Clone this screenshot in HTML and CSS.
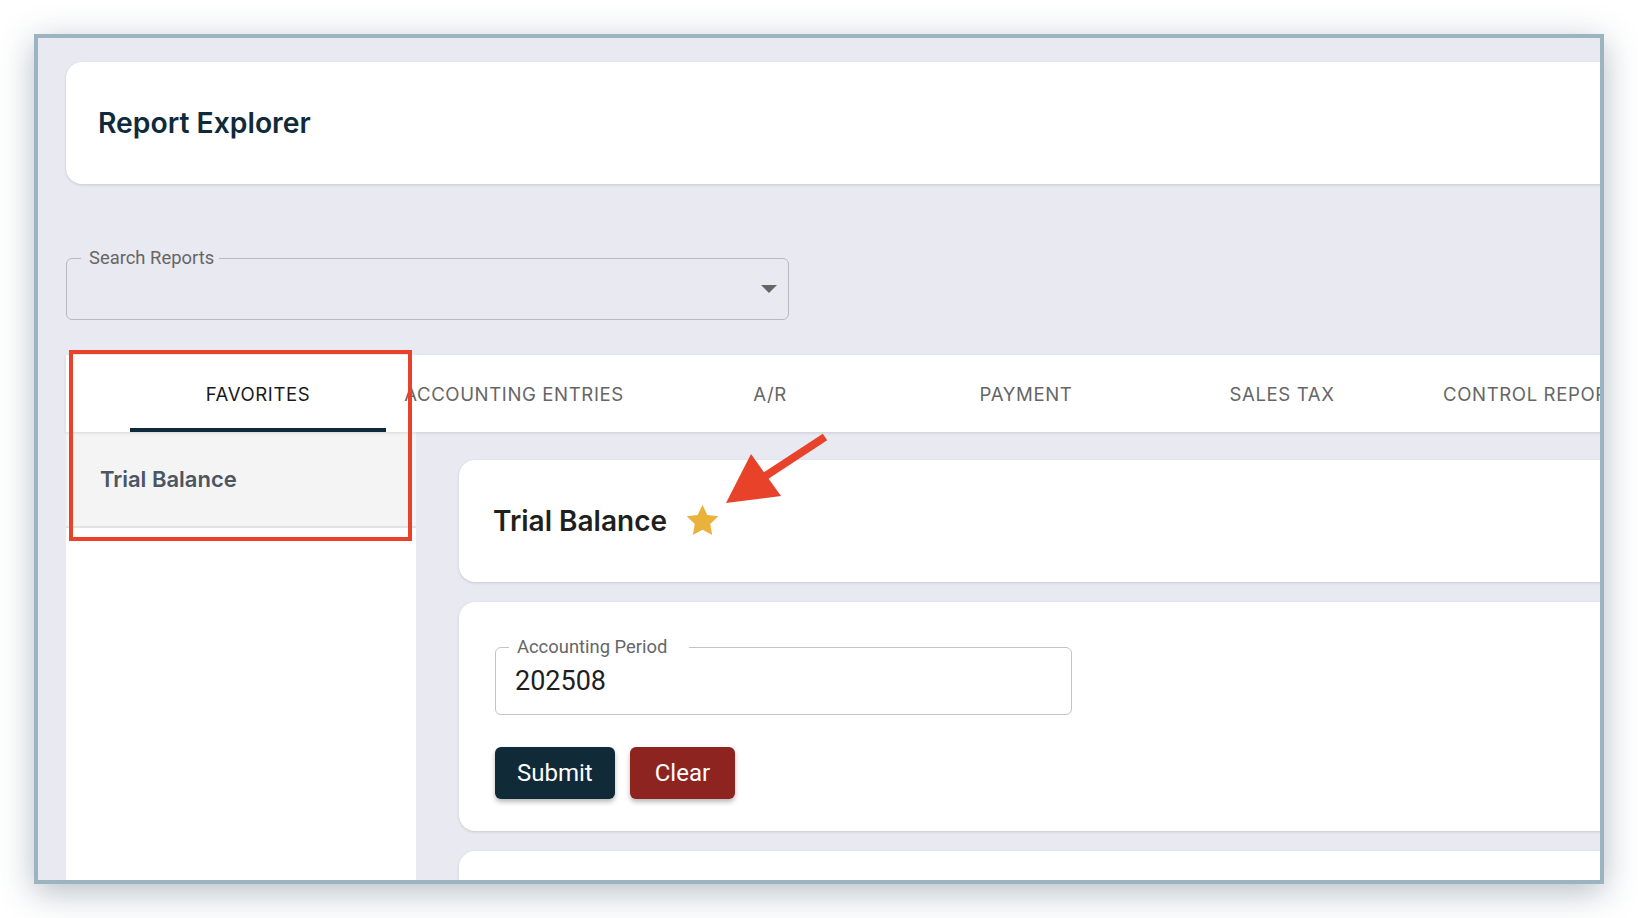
FILE: index.html
```
<!DOCTYPE html>
<html lang="en">
<head>
<meta charset="UTF-8"/>
<meta name="viewport" content="width=device-width, initial-scale=1.0"/>
<title>Report Explorer</title>
<link rel="stylesheet" href="styles.css">
</head>
<body>

<div class="frame">
  <div class="app">
    <header class="page-head">
      <h1>Report Explorer</h1>
    </header>

    <div class="search-field">
      <span class="field-label">Search Reports</span>
      <span class="caret"></span>
    </div>

    <nav class="tabs">
      <div class="tab active">Favorites</div>
      <div class="tab">Accounting Entries</div>
      <div class="tab">A/R</div>
      <div class="tab">Payment</div>
      <div class="tab">Sales Tax</div>
      <div class="tab">Control Reports</div>
    </nav>

    <div class="workspace">
      <aside class="sidebar">
        <div class="side-item">Trial Balance</div>
      </aside>
      <main class="content">
        <section class="card report-head">
          <h2>Trial Balance</h2>
          <svg class="star" viewBox="0 0 24 24" width="37" height="37"><path d="M12 1.8l3.1 6.6 7.1.9-5.2 5 1.3 7.1L12 18l-6.3 3.4L7 14.3l-5.2-5 7.1-.9z" fill="#e9b23b"/></svg>
        </section>
        <section class="card params">
          <div class="out-field">
            <span class="field-label">Accounting Period</span>
            <input type="text" value="202508">
          </div>
          <div class="actions">
            <button class="btn submit">Submit</button>
            <button class="btn clear">Clear</button>
          </div>
        </section>
        <section class="card results"></section>
      </main>
    </div>
  </div>

  <!-- annotation -->
  <div class="mark-box"></div>
  <svg class="mark-arrow" viewBox="680 420 160 100" width="160" height="100">
    <line x1="825" y1="437" x2="764" y2="477" stroke="#e8432a" stroke-width="8"/>
    <polygon points="726,503 751,454 781,496" fill="#e8432a"/>
  </svg>
</div>

</body>
</html>
```

FILE: styles.css
```
*{box-sizing:border-box;margin:0;padding:0;}
body{background:#fff;padding:34px;font-family:'Inter','Noto Sans',sans-serif;}
.frame{position:relative;width:1570px;height:850px;border:4px solid #9cb3c0;overflow:hidden;box-shadow:0 8px 32px rgba(40,70,90,0.35);background:#e9e9f2;}
.app{width:1720px;padding:24px 0 0 28px;background:#e9e9f2;}
.page-head{height:122px;background:#fff;border-radius:16px 0 0 16px;box-shadow:0 1px 3px rgba(0,0,0,0.14);display:flex;align-items:center;padding:0 32px;}
.page-head h1{font-size:28.3px;font-weight:600;color:#0f2a3a;}
.field-label{position:absolute;font-family:'Roboto',sans-serif;font-size:18.4px;color:#666;line-height:22px;}
.search-field{position:relative;margin-top:74px;width:723px;height:62px;border:1px solid #b9b9c2;border-radius:6px;}
.search-field .field-label{left:14px;top:-12px;padding:0 5px 0 8px;background:#e9e9f2;}
.caret{position:absolute;right:11px;top:26px;border-left:8px solid transparent;border-right:8px solid transparent;border-top:8px solid #666;}
.tabs{display:flex;margin-top:35px;height:77px;padding-left:64px;background:#fff;box-shadow:0 1px 3px rgba(0,0,0,0.12);position:relative;z-index:1;}
.tab{flex:none;width:256px;display:flex;align-items:center;justify-content:center;font-size:18.6px;letter-spacing:0.6px;text-transform:uppercase;color:#666;border-bottom:4px solid transparent;padding-top:4px;white-space:nowrap;}
.tab.active{color:#1a1a1a;border-bottom-color:#0f2a3a;}
.workspace{display:flex;height:500px;}
.sidebar{flex:none;width:350px;background:#fff;}
.side-item{height:96px;display:flex;align-items:center;padding:0 34px;background:#f4f4f4;border-bottom:2px solid #e2e2e2;font-size:22px;font-weight:600;color:#4b5563;}
.content{flex:1;padding:28px 0 0 43px;display:flex;flex-direction:column;gap:20px;}
.card{flex:none;background:#fff;border-radius:16px 0 0 16px;box-shadow:0 1px 3px rgba(0,0,0,0.14);}
.report-head{height:122px;display:flex;align-items:center;gap:17px;padding:0 34px;}
.report-head h2{font-size:28px;font-weight:600;color:#1f1f1f;}
.star{margin-top:-2px;}
.params{height:229px;padding:45px 36px 32px;}
.out-field{position:relative;width:577px;height:68px;border:1px solid #c4c4c4;border-radius:6px;}
.out-field .field-label{left:13px;top:-12px;padding:0 22px 0 8px;background:#fff;}
.out-field input{width:100%;height:100%;border:none;outline:none;background:transparent;padding:0 19px;font-family:'Roboto',sans-serif;font-size:27px;color:#1f1f1f;}
.actions{display:flex;gap:15px;margin-top:32px;}
.btn{height:52px;padding:0 22px;border:none;border-radius:6px;font-family:'Roboto',sans-serif;font-size:24px;font-weight:400;color:#fff;box-shadow:0 3px 5px rgba(0,0,0,0.28);}
.btn.submit{background:#102a38;}
.btn.clear{background:#8e2420;padding:0 25px;}
.results{height:120px;}
.mark-box{position:absolute;left:31px;top:312px;width:343px;height:191px;border:4px solid #e8432a;z-index:5;}
.mark-arrow{position:absolute;left:642px;top:382px;z-index:5;}
```
